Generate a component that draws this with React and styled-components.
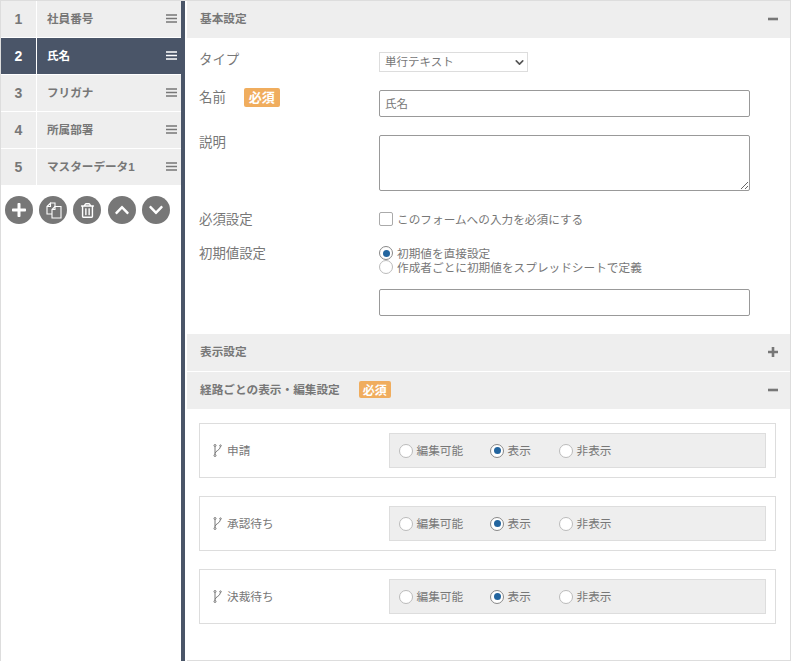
import React from "react";
import styled, { createGlobalStyle } from "styled-components";
import { FaPlus, FaChevronUp, FaChevronDown, FaRegTrashAlt } from "react-icons/fa";
import { ChevronDown } from "lucide-react";

const fields = ["社員番号", "氏名", "フリガナ", "所属部署", "マスターデータ1"];
const routes = ["申請", "承認待ち", "決裁待ち"];
const modes = ["編集可能", "表示", "非表示"];

const Global = createGlobalStyle`
  html, body { margin: 0; padding: 0; background: #fff; }
  body { font-family: "Liberation Sans", "Noto Sans CJK JP", sans-serif; color: #777; }
  * { box-sizing: border-box; }
`;

const BarsIcon = () => (
  <svg width="11" height="9" viewBox="0 0 11 9">
    <path d="M0 1h11M0 4.5h11M0 8h11" stroke="currentColor" strokeWidth="1.6" />
  </svg>
);

const CopyIcon = () => (
  <svg width="18" height="18" viewBox="0 0 18 18" fill="none" stroke="#fff" strokeWidth="1.1">
    <path d="M6.5 2H11V7M3 5.5L6.5 2V5.5H3V13H8" />
    <path d="M11 5.5h6v11.5H8V8.5z" fill="#777" />
    <path d="M11 5.5v3H8" />
  </svg>
);

const BranchIcon = () => (
  <svg width="9" height="13" viewBox="0 0 9 13" fill="none" stroke="#777" strokeWidth="1">
    <path d="M2 2.5v8" />
    <circle cx="2" cy="1.5" r="1" />
    <circle cx="2" cy="11.5" r="1" />
    <path d="M2 9.5C2.5 6.5 7 6.5 7.5 2.5" />
    <circle cx="7.5" cy="1.7" r="0.8" />
  </svg>
);

const PlusIcon = () => (
  <svg width="10" height="10" viewBox="0 0 10 10">
    <path d="M0 5h10M5 0v10" stroke="#777" strokeWidth="2.6" />
  </svg>
);

const MinusIcon = () => (
  <svg width="10" height="10" viewBox="0 0 10 10">
    <path d="M0 5h10" stroke="#777" strokeWidth="2.6" />
  </svg>
);

const App = () => (
  <Frame>
    <Global />
    <Sidebar>
      <FieldList>
        {fields.map((name, i) => (
          <FieldRow key={name} $active={i === 1}>
            <FieldNum>{i + 1}</FieldNum>
            <FieldName>
              <span>{name}</span>
              <BarsIcon />
            </FieldName>
          </FieldRow>
        ))}
      </FieldList>
      <Tools>
        <ToolBtn><FaPlus size={16} /></ToolBtn>
        <ToolBtn><CopyIcon /></ToolBtn>
        <ToolBtn><FaRegTrashAlt size={15} /></ToolBtn>
        <ToolBtn $push><FaChevronUp size={16} /></ToolBtn>
        <ToolBtn><FaChevronDown size={16} /></ToolBtn>
      </Tools>
    </Sidebar>
    <Divider />
    <Main>
      <SectionHead>
        <HeadTitle>基本設定</HeadTitle>
        <MinusIcon />
      </SectionHead>
      <Form>
        <FormRow $height={52} $top={14}>
          <Label>タイプ</Label>
          <SelectWrap>
            <TypeSelect defaultValue="単行テキスト">
              <option>単行テキスト</option>
            </TypeSelect>
            <SelectArrow><ChevronDown size={13} strokeWidth={3} /></SelectArrow>
          </SelectWrap>
        </FormRow>
        <FormRow $height={45}>
          <Label>
            名前<Required>必須</Required>
          </Label>
          <TextInput defaultValue="氏名" />
        </FormRow>
        <FormRow $height={77}>
          <Label>説明</Label>
          <TextArea />
        </FormRow>
        <FormRow $height={34}>
          <Label>必須設定</Label>
          <CheckLine>
            <CheckBox />
            <LineText>このフォームへの入力を必須にする</LineText>
          </CheckLine>
        </FormRow>
        <FormRow $height={88}>
          <Label>初期値設定</Label>
          <Stack>
            <RadioLine><Radio $on /><LineText>初期値を直接設定</LineText></RadioLine>
            <RadioLine><Radio /><LineText>作成者ごとに初期値をスプレッドシートで定義</LineText></RadioLine>
            <EmptyInput />
          </Stack>
        </FormRow>
      </Form>
      <SectionHead>
        <HeadTitle>表示設定</HeadTitle>
        <PlusIcon />
      </SectionHead>
      <SectionHead $gap>
        <HeadTitle>
          経路ごとの表示・編集設定<SmallRequired>必須</SmallRequired>
        </HeadTitle>
        <MinusIcon />
      </SectionHead>
      <Routes>
        {routes.map((route) => (
          <RouteCard key={route}>
            <RouteName><BranchIcon /><LineText>{route}</LineText></RouteName>
            <ModeBox>
              {modes.map((mode) => (
                <ModeOption key={mode} $width={mode === "編集可能" ? 91 : mode === "表示" ? 69 : 60}>
                  <Radio $on={mode === "表示"} />
                  <LineText>{mode}</LineText>
                </ModeOption>
              ))}
            </ModeBox>
          </RouteCard>
        ))}
      </Routes>
    </Main>
  </Frame>
);

const Frame = styled.div`
  display: flex;
  width: 791px;
  height: 661px;
  overflow: hidden;
  border-top: 1px solid #ddd;
  border-left: 1px solid #ddd;
  border-right: 1px solid #ddd;
`;

const Sidebar = styled.div`
  width: 180px;
  flex: none;
`;

const FieldList = styled.div`
  display: flex;
  flex-direction: column;
`;

const FieldRow = styled.div`
  display: flex;
  height: 37px;
  border-bottom: 1px solid #fff;
  background: ${(p) => (p.$active ? "#4a5568" : "#eee")};
  color: ${(p) => (p.$active ? "#fff" : "#777")};
`;

const FieldNum = styled.div`
  width: 36px;
  flex: none;
  border-right: 1px solid #fff;
  display: flex;
  align-items: center;
  justify-content: center;
  padding-bottom: 1px;
  font-size: 14px;
  font-weight: 700;
`;

const FieldName = styled.div`
  flex: 1;
  display: flex;
  align-items: center;
  justify-content: space-between;
  padding: 0 4px 1px 10px;
  font-size: 11.6px;
  font-weight: 700;
  & > span {
    margin-top: -2px;
  }
`;

const Tools = styled.div`
  display: flex;
  gap: 6px;
  padding: 10px 0 0 4px;
`;

const ToolBtn = styled.div`
  width: 28px;
  height: 28px;
  border-radius: 50%;
  background: #777;
  color: #fff;
  display: flex;
  align-items: center;
  justify-content: center;
  margin-left: ${(p) => (p.$push ? "1px" : "0")};
`;

const Divider = styled.div`
  width: 4px;
  flex: none;
  background: #4a5568;
`;

const Main = styled.div`
  flex: 1;
  min-width: 0;
  margin-left: 2px;
  border-bottom: 1px solid #ddd;
  height: 660px;
`;

const SectionHead = styled.div`
  height: 37px;
  background: #eee;
  display: flex;
  align-items: center;
  justify-content: space-between;
  padding: 0 12px 1px 13px;
  margin-top: ${(p) => (p.$gap ? "1px" : "0")};
`;

const HeadTitle = styled.div`
  display: flex;
  align-items: center;
  padding-bottom: 3px;
  font-size: 11.67px;
  font-weight: 700;
`;

const Form = styled.div`
  padding: 0 0 0 12px;
  height: 296px;
`;

const FormRow = styled.div`
  display: flex;
  height: ${(p) => p.$height}px;
  padding-top: ${(p) => p.$top || 0}px;
`;

const Label = styled.div`
  width: 180px;
  flex: none;
  display: flex;
  align-items: flex-start;
  font-size: 13.4px;
  line-height: 16px;
  color: #777;
`;

const Required = styled.span`
  margin: -2px 0 0 18px;
  width: 36px;
  height: 19px;
  border-radius: 2px;
  background: #f0ad5e;
  color: #fff;
  font-size: 13px;
  font-weight: 700;
  display: flex;
  align-items: center;
  justify-content: center;
`;

const SmallRequired = styled(Required)`
  margin: 2px 0 0 19px;
  width: 32px;
  height: 17px;
  font-size: 12px;
`;

const SelectWrap = styled.div`
  position: relative;
  width: 149px;
  height: 20px;
`;

const TypeSelect = styled.select`
  appearance: none;
  width: 100%;
  height: 100%;
  border: 1px solid #ddd;
  background: #fff;
  padding: 0 0 0 5px;
  font: 11.5px "Liberation Sans", "Noto Sans CJK JP", sans-serif;
  color: #777;
  outline: none;
`;

const SelectArrow = styled.span`
  position: absolute;
  right: 2px;
  top: 4px;
  color: #555;
  display: flex;
`;

const TextInput = styled.input`
  width: 371px;
  height: 27px;
  border: 1px solid #999;
  border-radius: 2px;
  padding: 0 5px 2px;
  font: 11.5px "Liberation Sans", "Noto Sans CJK JP", sans-serif;
  color: #777;
  outline: none;
`;

const TextArea = styled.textarea`
  width: 371px;
  height: 56px;
  border: 1px solid #999;
  border-radius: 2px;
  outline: none;
  display: block;
`;

const LineText = styled.span`
  margin-top: -2px;
`;

const CheckLine = styled.div`
  display: flex;
  align-items: center;
  height: 14px;
  gap: 4px;
  font-size: 11.67px;
`;

const CheckBox = styled.span`
  width: 14px;
  height: 14px;
  border: 1px solid #aaa;
  border-radius: 2px;
  background: #fff;
`;

const Stack = styled.div`
  display: flex;
  flex-direction: column;
`;

const RadioLine = styled.div`
  display: flex;
  align-items: center;
  gap: 4px;
  height: 14px;
  font-size: 11.67px;
`;

const Radio = styled.span`
  width: 14px;
  height: 14px;
  flex: none;
  border-radius: 50%;
  background: #fff;
  border: 1px solid ${(p) => (p.$on ? "#888" : "#bbb")};
  display: flex;
  align-items: center;
  justify-content: center;
  &::after {
    content: "";
    display: ${(p) => (p.$on ? "block" : "none")};
    width: 7px;
    height: 7px;
    border-radius: 50%;
    background: #23659f;
  }
`;

const EmptyInput = styled(TextInput)`
  margin-top: 15px;
`;

const Routes = styled.div`
  padding: 14px 14px 0 12px;
  display: flex;
  flex-direction: column;
  gap: 18px;
`;

const RouteCard = styled.div`
  height: 55px;
  border: 1px solid #ddd;
  padding: 9px 9px 9px 13px;
  display: flex;
  align-items: center;
`;

const RouteName = styled.div`
  width: 176px;
  flex: none;
  display: flex;
  align-items: center;
  gap: 5px;
  font-size: 11.67px;
`;

const ModeBox = styled.div`
  flex: 1;
  height: 35px;
  background: #eee;
  border: 1px solid #ddd;
  padding-left: 9px;
  display: flex;
  align-items: center;
`;

const ModeOption = styled.div`
  width: ${(p) => p.$width}px;
  display: flex;
  align-items: center;
  gap: 3.5px;
  font-size: 11.67px;
  white-space: nowrap;
`;

export default App;
